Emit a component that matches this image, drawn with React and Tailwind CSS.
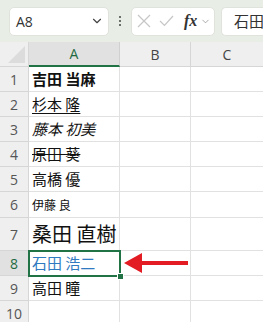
import React from 'react';
import { ChevronDown } from 'lucide-react';

const rows = [
  { n: 1, text: '吉田 当麻', h: 'h-[25px]', cls: 'font-bold text-[15px]' },
  { n: 2, text: '杉本 隆', h: 'h-[25px]', cls: 'underline decoration-1 decoration-[#111] underline-offset-[3px] text-[15px]' },
  { n: 3, text: '藤本 初美', h: 'h-[25px]', cls: 'italic text-[15px]' },
  { n: 4, text: '原田 葵', h: 'h-[25px]', cls: 'line-through text-[15px]' },
  { n: 5, text: '高橋 優', h: 'h-[25px]', cls: 'text-[15px]' },
  { n: 6, text: '伊藤 良', h: 'h-[26px]', cls: 'text-[12px]' },
  { n: 7, text: '桑田 直樹', h: 'h-[33px]', cls: 'text-[20px]' },
  { n: 8, text: '石田 浩二', h: 'h-[25px]', cls: 'text-[15px] text-[#2f7ac0]', selected: true },
  { n: 9, text: '高田 瞳', h: 'h-[25px]', cls: 'text-[15px]' },
  { n: 10, text: '', h: 'h-[25px]', cls: '' },
];

const jp = { fontFamily: '"Noto Sans CJK JP", "Noto Sans", sans-serif' };

const App = () => {
  return (
    <div className="w-[263px] h-[322px] overflow-hidden bg-white" style={{ fontFamily: '"Open Sans", "Noto Sans CJK JP", sans-serif' }}>
      {/* FORMULA BAR */}
      <div className="h-[42px] bg-[#e8ede5] flex items-center pl-[9px]">
        <div className="shrink-0 w-[100px] h-[29px] bg-white rounded-[5px] border border-[#dfe3dc] flex items-center justify-between pl-[6px] pr-[4px]">
          <span className="text-[14px] text-[#333]">A8</span>
          <ChevronDown className="w-[14px] h-[14px] text-[#444]" strokeWidth={2} />
        </div>
        <div className="shrink-0 flex flex-col gap-[2px] w-[22px] items-center">
          <span className="w-[2px] h-[2px] bg-[#444] rounded-full" />
          <span className="w-[2px] h-[2px] bg-[#444] rounded-full" />
          <span className="w-[2px] h-[2px] bg-[#444] rounded-full" />
        </div>
        <div className="shrink-0 w-[84px] h-[29px] bg-white rounded-[5px] border border-[#dfe3dc] flex items-center pl-[4px]">
          <svg width="14" height="14" viewBox="0 0 14 14" className="ml-[1px]">
            <path d="M1 1 L13 13 M13 1 L1 13" stroke="#c6c6c6" strokeWidth="1.2" fill="none" />
          </svg>
          <svg width="15" height="12" viewBox="0 0 15 12" className="ml-[8px]">
            <path d="M1 6 L5.5 10.5 L14 1" stroke="#c6c6c6" strokeWidth="1.2" fill="none" />
          </svg>
          <span className="ml-[10px] text-[16px] italic font-bold text-[#333] leading-none" style={{ fontFamily: '"Liberation Serif", serif' }}>fx</span>
          <ChevronDown className="ml-[3px] w-[11px] h-[11px] text-[#888]" strokeWidth={1.5} />
        </div>
        <div className="ml-[6px] flex-1 min-w-0 h-[29px] bg-white rounded-l-[5px] border border-r-0 border-[#dfe3dc] flex items-center pl-[12px] overflow-hidden">
          <span className="text-[15px] text-[#333] whitespace-nowrap" style={jp}>石田 浩二</span>
        </div>
      </div>

      {/* GRID */}
      <div className="relative">
        <div className="grid grid-cols-[29px_91px_71px_72px] h-[25px] bg-[#efefef] text-[14px] text-[#444]">
          <div className="border-r border-b border-[#d6d6d6] relative overflow-hidden">
            <div className="absolute right-[3px] bottom-[3px] w-0 h-0 border-l-[17px] border-l-transparent border-b-[17px] border-b-[#dcdcdc]" />
          </div>
          <div className="bg-[#e1e1e1] border-r border-[#d0d0d0] border-b-2 border-b-[#217346] flex items-center justify-center text-[#1e6b41]">A</div>
          <div className="border-r border-b border-[#d6d6d6] flex items-center justify-center">B</div>
          <div className="border-b border-[#d6d6d6] flex items-center justify-center">C</div>
        </div>

        {rows.map((r) => (
          <div key={r.n} className={`grid grid-cols-[29px_91px_71px_72px] ${r.h}`}>
            <div className={`border-r border-b border-[#d6d6d6] flex items-center justify-center text-[14px] ${r.selected ? 'bg-[#e1e1e1] text-[#1e6b41]' : 'bg-[#efefef] text-[#555]'}`}>
              {r.n}
            </div>
            <div className="border-r border-b border-[#e1e1e1] flex items-center pl-[3px] text-[#111] overflow-hidden whitespace-nowrap">
              <span className={r.cls} style={jp}>{r.text}</span>
            </div>
            <div className="border-r border-b border-[#e1e1e1]" />
            <div className="border-b border-[#e1e1e1]" />
          </div>
        ))}

        {/* SELECTION */}
        <div className="absolute left-[28px] top-[208px] w-[93px] h-[27px] border-2 border-[#217346] pointer-events-none">
          <div className="absolute -right-[5px] -bottom-[5px] w-[7px] h-[7px] bg-[#217346] border border-white" />
        </div>

        {/* ARROW */}
        <svg className="absolute left-[124px] top-[210px]" width="64" height="22" viewBox="0 0 64 22">
          <polygon points="0,11 18,1 18,21" fill="#e31b23" />
          <rect x="16" y="9" width="48" height="4" fill="#e31b23" />
        </svg>
      </div>
    </div>
  );
};

export default App;
